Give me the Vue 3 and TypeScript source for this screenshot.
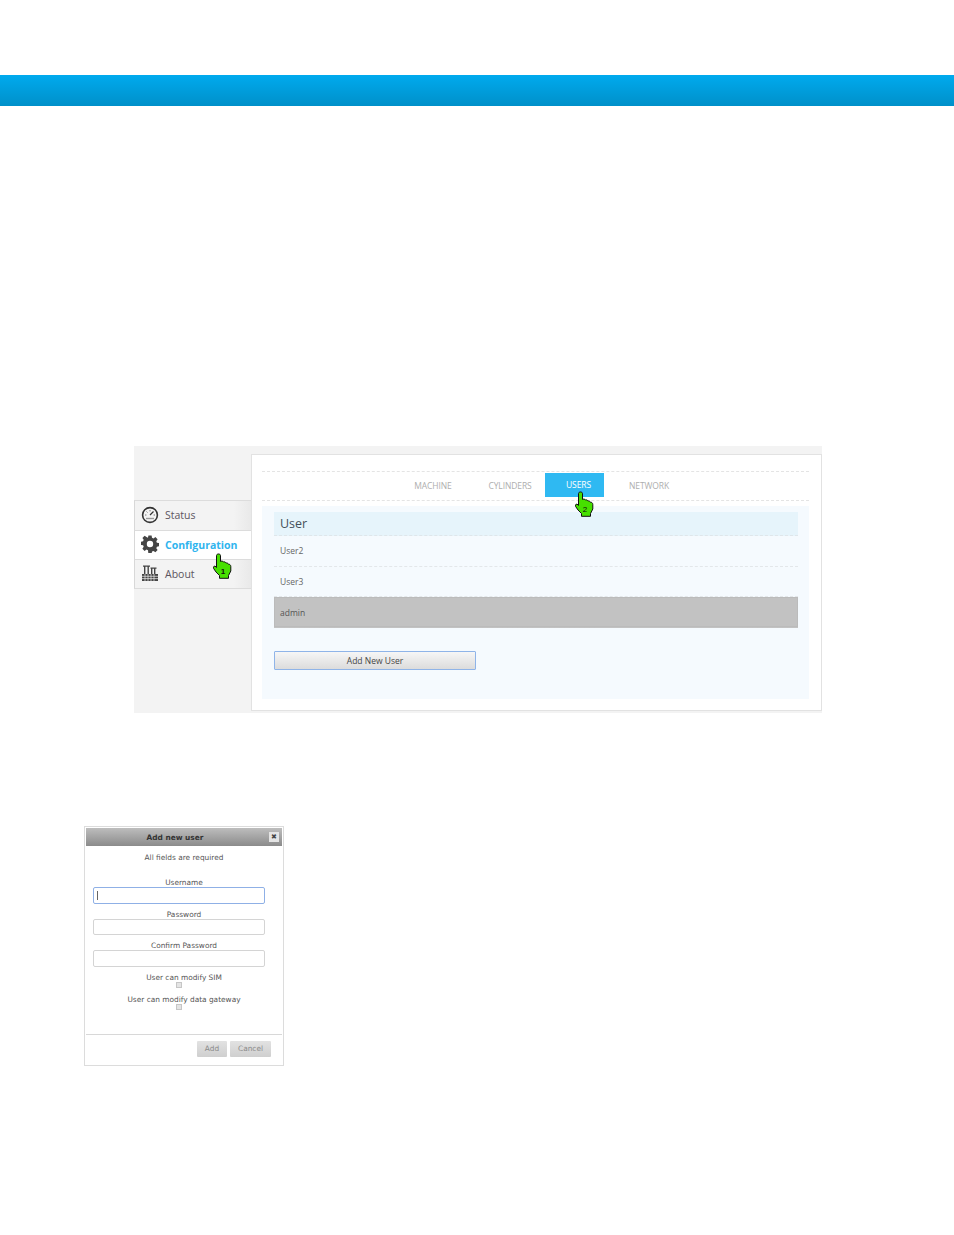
<script setup lang="ts">
const tabs: string[] = ['MACHINE', 'CYLINDERS', 'USERS', 'NETWORK']
const users: string[] = ['User2', 'User3', 'admin']
const handPath = 'M3.500 2.600C3.500 .4 7.500 .4 7.500 2.600V8.500C8.500 7.800 10 8 10.300 9C11.200 8.600 12.600 9 12.900 10C13.800 9.800 15.200 10.200 15.500 11.300C16.600 11 17.800 12 17.800 13.500V18L15.500 22.500V25.300H6.500V22.500L3 19L.6 15.400C-.2 13.400 1.600 12.400 3 13.800L3.500 14.500Z'
</script>

<template>
  <div class="page">
    <div class="topbar"></div>

    <section class="shot">
      <aside class="side">
        <div class="nav">
          <svg class="ico" viewBox="0 0 18 18">
            <circle cx="9" cy="9" r="7.400" fill="#f4f4f4" stroke="#333" stroke-width="1.600" />
            <path d="M9 9L12.500 5.500" stroke="#333" stroke-width="1.300" />
            <path d="M4 9h1.400M9 4v1.400M12.600 9H14M5.500 5.500l1 1" stroke="#777" stroke-width="1" />
            <path d="M5 12.500h8" stroke="#999" stroke-width="1.400" />
          </svg>
          <span>Status</span>
        </div>
        <div class="nav active">
          <svg class="ico" viewBox="0 0 18 18">
            <path fill="#444" fill-rule="evenodd" d="M7.400.6h3.200l.4 2.200 1.500.6 1.900-1.300 2.200 2.200-1.300 1.900.6 1.500 2.200.4v3.200l-2.200.4-.6 1.500 1.300 1.900-2.200 2.200-1.900-1.300-1.500.6-.4 2.200H7.400L7 15.200l-1.500-.6-1.900 1.300-2.200-2.200 1.300-1.900-.6-1.500-2.200-.4V6.700l2.200-.4.6-1.500L1.400 2.900 3.600.7l1.900 1.300L7 2.800ZM9 5.800a3.200 3.200 0 1 0 0 6.400 3.200 3.200 0 0 0 0-6.400Z" />
          </svg>
          <span class="low">Configuration</span>
          <svg class="hand hand-one" viewBox="0 0 20 26">
            <path :d="handPath" fill="#46e000" stroke="#111" stroke-width="1" stroke-linejoin="round" />
            <text x="10" y="21" class="hand-num">1</text>
          </svg>
        </div>
        <div class="nav">
          <svg class="ico" viewBox="0 0 18 18">
            <path fill="#444" d="M1 10h16v7H1zM3 2h1.400v8H3zM6.500 2h1.400v8H6.500zM2 1.500h7v1.200H2zM10 4h1.400v6H10zM13 4h1.400v6H13zM9.500 3.500h6v1.200h-6z" />
            <path stroke="#eee" stroke-width=".7" d="M1 12.300h16M1 14.600h16M4 10v7M7 10v7M10 10v7M13 10v7" />
          </svg>
          <span class="low">About</span>
        </div>
      </aside>

      <main class="panel">
        <nav class="tabs">
          <span v-for="t in tabs" :key="t" class="tab" :class="{ on: t === 'USERS' }">{{ t }}</span>
          <svg class="hand hand-two" viewBox="0 0 20 26">
            <path :d="handPath" fill="#46e000" stroke="#111" stroke-width="1" stroke-linejoin="round" />
            <text x="10" y="21" class="hand-num">2</text>
          </svg>
        </nav>
        <div class="content">
          <h2 class="title">User</h2>
          <div v-for="u in users" :key="u" class="row" :class="{ sel: u === 'admin' }">{{ u }}</div>
          <button class="add" type="button">Add New User</button>
        </div>
      </main>
    </section>

    <section class="dialog">
      <header class="dlg-head">
        <span>Add new user</span>
        <i class="close">✖</i>
      </header>
      <p class="req">All fields are required</p>
      <div class="fields">
        <label class="lbl first">Username</label>
        <div class="input focus"><i class="caret"></i></div>
        <label class="lbl">Password</label>
        <div class="input"></div>
        <label class="lbl">Confirm Password</label>
        <div class="input tall"></div>
        <label class="lbl">User can modify SIM</label>
        <div class="check"></div>
        <label class="lbl second">User can modify data gateway</label>
        <div class="check"></div>
      </div>
      <footer class="dlg-foot">
        <span class="btn">Add</span>
        <span class="btn wide">Cancel</span>
      </footer>
    </section>
  </div>
</template>

<style>
html, body { margin: 0; background: #fff; }
</style>

<style scoped>
.page {
  width: 954px;
  height: 1235px;
  overflow: hidden;
  padding-top: 75px;
  box-sizing: border-box;
  font-family: "Open Sans", sans-serif;
  color: #555;
}
.topbar {
  height: 31px;
  background: linear-gradient(#00aaee, #0090c9);
}
.shot {
  display: flex;
  width: 688px;
  height: 267px;
  margin: 340px 0 0 134px;
  background: #f3f3f3;
}
.side {
  width: 117px;
  padding-top: 54px;
  flex: none;
}
.nav {
  position: relative;
  display: flex;
  align-items: center;
  height: 29px;
  padding-left: 6px;
  gap: 6px;
  font-size: 10.500px;
  color: #5c5560;
  background: linear-gradient(90deg, #f3f3f3 85%, #e9e9e9);
  border-top: 1px solid #dcdcdc;
  border-left: 1px solid #d8d8d8;
}
.nav span, .nav .ico { margin-bottom: 2px; }
.nav span.low { margin-bottom: 0; }
.nav:last-child { border-bottom: 1px solid #dcdcdc; height: 28px; }
.nav.active {
  z-index: 1;
  background: #fff;
  color: #2fb4ee;
  font-weight: 700;
  font-size: 10.500px;
  height: 28px;
}
.ico { width: 18px; height: 18px; flex: none; }
.hand { position: absolute; width: 20px; height: 26px; }
.hand-one { left: 78px; top: 22px; }
.hand-two { left: 313px; top: 19px; z-index: 1; }
.hand-num { font-size: 8px; text-anchor: middle; fill: #111; font-family: "Liberation Sans", sans-serif; }
.panel {
  flex: 1;
  margin: 8px 0 2px;
  padding: 16px 12px 11px 10px;
  background: #fff;
  border: 1px solid #e2e2e2;
  box-sizing: border-box;
  display: flex;
  flex-direction: column;
}
.tabs {
  position: relative;
  display: flex;
  align-items: center;
  flex: none;
  height: 28px;
  margin-bottom: 5px;
  border-top: 1px dashed #e4e4e4;
  border-bottom: 1px dashed #e4e4e4;
}
.tab {
  margin-top: -2px;
  font-size: 8.500px;
  letter-spacing: -.1px;
  text-align: center;
  color: #aeaeae;
}
.tab:nth-child(1) { width: 38px; margin-left: 152px; }
.tab:nth-child(2) { width: 44px; margin-left: 36px; }
.tab:nth-child(4) { width: 42px; margin-left: 24px; }
.tab.on {
  width: 59px;
  height: 24px;
  line-height: 24px;
  margin-left: 13px;
  padding-left: 21px;
  box-sizing: border-box;
  text-align: left;
  background: #2fb9f2;
  color: #fff;
}
.content {
  flex: 1;
  padding: 6px 11px 0 12px;
  background: #f5fafe;
}
.title {
  margin: 0;
  height: 23px;
  line-height: 23px;
  padding-left: 6px;
  font-size: 12.500px;
  font-weight: 400;
  color: #45505a;
  background: #e6f4fb;
  border-bottom: 1px dashed #dfe6ea;
}
.row {
  height: 30px;
  line-height: 30px;
  padding-left: 6px;
  font-size: 8.500px;
  color: #666;
  border-bottom: 1px dashed #e3e7ea;
}
.row:nth-child(3) { height: 29px; }
.row.sel {
  line-height: 32px;
  background: #c2c2c2;
  color: #555;
  box-shadow: inset 0 0 0 1px #bbb;
  border-bottom-color: #c2c2c2;
}
.add {
  display: block;
  width: 202px;
  height: 19px;
  margin-top: 23px;
  padding: 0 0 1px;
  font-family: inherit;
  font-size: 8.500px;
  color: #444;
  background: linear-gradient(#f6f6f6, #dcdcdc);
  border: 1px solid #8fb4e8;
  border-radius: 1px;
}
.dialog {
  width: 200px;
  height: 240px;
  margin: 113px 0 0 84px;
  padding: 1px;
  background: #fff;
  border: 1px solid #dcdcdc;
  box-sizing: border-box;
  font-family: "DejaVu Sans", sans-serif;
  font-size: 7.400px;
  color: #555;
  display: flex;
  flex-direction: column;
}
.dlg-head {
  position: relative;
  height: 18px;
  line-height: 19px;
  flex: none;
  padding-right: 18px;
  text-align: center;
  font-weight: 700;
  color: #333;
  background: linear-gradient(#bdbdbd, #8b8b8b);
}
.close {
  position: absolute;
  right: 3px;
  top: 4px;
  width: 10px;
  height: 10px;
  line-height: 10px;
  font-size: 7px;
  font-style: normal;
  text-align: center;
  color: #444;
  background: #e4e4e4;
}
.req {
  margin: 7px 0 0;
  line-height: 10px;
  text-align: center;
}
.fields {
  flex: 1;
  display: flex;
  flex-direction: column;
  align-items: center;
}
.lbl {
  display: block;
  width: 100%;
  height: 10px;
  margin-top: 5px;
  line-height: 12px;
  text-align: center;
}
.lbl.first { margin-top: 14px; }
.lbl.second { margin-top: 6px; }
.input {
  position: relative;
  width: 172px;
  height: 16px;
  margin-right: 10px;
  background: #fff;
  border: 1px solid #d4d4d4;
  border-radius: 2px;
  box-sizing: border-box;
}
.input.tall { height: 17px; }
.input.focus { height: 17px; border-color: #8fb0e6; }
.caret {
  position: absolute;
  left: 3px;
  top: 3px;
  width: 1px;
  height: 9px;
  background: #666;
}
.check {
  width: 6px;
  height: 6px;
  margin-right: 10px;
  background: #e4e4e4;
  border: 1px solid #c6c6c6;
  box-sizing: border-box;
}
.dlg-foot {
  height: 30px;
  flex: none;
  display: flex;
  justify-content: flex-end;
  align-items: flex-start;
  gap: 3px;
  padding: 6px 11px 0 0;
  border-top: 1px solid #d8d8d8;
  box-sizing: border-box;
}
.btn {
  width: 30px;
  height: 16px;
  line-height: 16px;
  text-align: center;
  color: #8a8a8a;
  background: linear-gradient(#e2e2e2, #cfcfcf);
  border-radius: 1px;
}
.btn.wide { width: 41px; }
</style>
